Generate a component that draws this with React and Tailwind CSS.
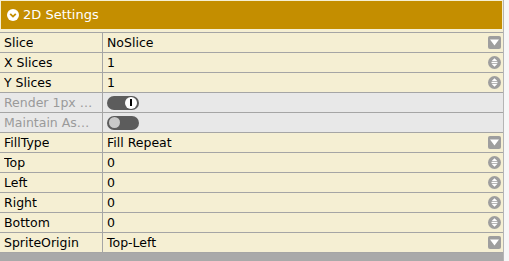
import React from "react";

const font = { fontFamily: '"DejaVu Sans", Verdana, sans-serif' };

const DropIcon = () => (
  <svg width="13" height="13" viewBox="0 0 13 13">
    <rect x="0" y="0" width="13" height="13" rx="2" fill="#9e9e9e" />
    <path d="M2 3.5 H11 L6.5 9.5 Z" fill="#fff" />
  </svg>
);

const SpinIcon = () => (
  <svg width="13" height="13" viewBox="0 0 13 13">
    <circle cx="6.5" cy="6.5" r="6.5" fill="#9e9e9e" />
    <path d="M3.5 5.3 L6.5 2.3 L9.5 5.3 Z" fill="#fff" />
    <path d="M3.5 7.7 L6.5 10.7 L9.5 7.7 Z" fill="#fff" />
    <rect x="3.5" y="6" width="6" height="1" fill="#fff" />
  </svg>
);

const Toggle = ({ on }) => (
  <div className="w-[32px] h-[14px] rounded-full bg-[#5c5c5c] flex items-center px-[2px]">
    {on ? (
      <div className="ml-auto w-[12px] h-[12px] rounded-full bg-white flex items-center justify-center">
        <div className="w-[2px] h-[7px] bg-black" />
      </div>
    ) : (
      <div className="w-[11px] h-[11px] rounded-full bg-[#c8c8c8]" />
    )}
  </div>
);

const rows = [
  { label: "Slice", value: "NoSlice", icon: "drop" },
  { label: "X Slices", value: "1", icon: "spin" },
  { label: "Y Slices", value: "1", icon: "spin" },
  { label: "Render 1px Border", toggle: true, on: true, disabled: true },
  { label: "Maintain Aspect", toggle: true, on: false, disabled: true },
  { label: "FillType", value: "Fill Repeat", icon: "drop" },
  { label: "Top", value: "0", icon: "spin" },
  { label: "Left", value: "0", icon: "spin" },
  { label: "Right", value: "0", icon: "spin" },
  { label: "Bottom", value: "0", icon: "spin" },
  { label: "SpriteOrigin", value: "Top-Left", icon: "drop" },
];

export default function App() {
  return (
    <div className="w-[509px] h-[261px] bg-[#f7f7f7] flex overflow-hidden" style={font}>
      <div className="w-[504px] h-full bg-[#f5efd3] border-r border-[#b5b5b5] flex flex-col">
        <div className="mx-[1px] mt-[1px] h-[28px] bg-[#c48e00] flex items-center pl-[6px] gap-[4px] text-white text-[13px]">
          <svg width="12" height="12" viewBox="0 0 12 12">
            <circle cx="6" cy="6" r="6" fill="#fff" />
            <path d="M3.2 4.8 L6 7.6 L8.8 4.8" stroke="#c48e00" strokeWidth="1.8" fill="none" />
          </svg>
          <span>2D Settings</span>
        </div>
        <div className="mt-[3px] border-t border-[#a5a5a5]">
          {rows.map((r) => (
            <div
              key={r.label}
              className={`h-[20px] flex border-b border-[#a5a5a5] text-[12.5px] ${
                r.disabled ? "bg-[#e8e8e8] text-[#9a9a9a]" : "text-black"
              }`}
            >
              <div className="w-[103px] shrink-0 border-r border-[#a5a5a5] pl-[4px] pr-[6px] flex items-center pt-[1px]">
                <span className="truncate">{r.label}</span>
              </div>
              <div className="flex-1 flex items-center pl-[4px] pr-[2px]">
                {r.toggle ? (
                  <Toggle on={r.on} />
                ) : (
                  <>
                    <span className="flex-1 pt-[1px]">{r.value}</span>
                    {r.icon === "drop" ? <DropIcon /> : <SpinIcon />}
                  </>
                )}
              </div>
            </div>
          ))}
        </div>
        <div className="flex-1 bg-[#a9a9a9]" />
      </div>
    </div>
  );
}
